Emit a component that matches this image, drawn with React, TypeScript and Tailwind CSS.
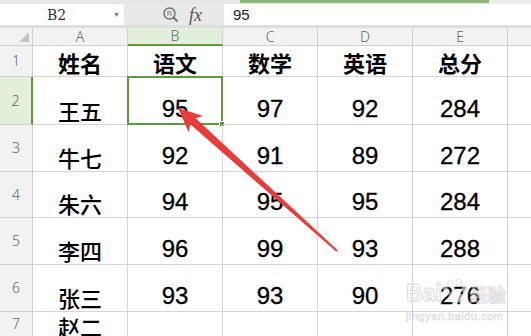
import React from "react";

const cols = ["A", "B", "C", "D", "E"];

const rows = [
  { n: "1", h: "h-[31px]", cells: ["姓名", "语文", "数学", "英语", "总分"], title: true },
  { n: "2", h: "h-[48px]", cells: ["王五", "95", "97", "92", "284"] },
  { n: "3", h: "h-[47px]", cells: ["牛七", "92", "91", "89", "272"] },
  { n: "4", h: "h-[46px]", cells: ["朱六", "94", "95", "95", "284"] },
  { n: "5", h: "h-[47px]", cells: ["李四", "96", "99", "93", "288"] },
  { n: "6", h: "h-[47px]", cells: ["张三", "93", "93", "90", "276"] },
];

const cjk = "font-['Noto_Sans_CJK_SC',sans-serif]";
const num = "font-['Liberation_Sans',Arial,sans-serif]";

function Cell({ value, title, selected }: { value: string; title?: boolean; selected?: boolean }) {
  const isNum = /^\d+$/.test(value);
  return (
    <div className="relative flex items-end justify-center border-r border-b border-[#d4d4d4] pb-[3px]">
      <span
        className={
          isNum
            ? `${num} text-[24px] leading-none text-black [-webkit-text-stroke:0.3px_black]`
            : `${cjk} text-[22px] leading-none text-black ${title ? "font-bold" : "font-medium"}`
        }
      >
        {value}
      </span>
      {selected && (
        <div className="absolute -left-px -top-px -right-px -bottom-px border-2 border-[#5f9a3f]">
          <div className="absolute -right-[4px] -bottom-[4px] size-[6px] bg-[#5f9a3f] border border-white" />
        </div>
      )}
    </div>
  );
}

function Arrow() {
  return (
    <svg className="absolute left-0 top-0 pointer-events-none" width="531" height="336">
      <polygon
        points="178,108 203,116 195.6,118.3 337.6,250.3 336.4,251.7 190.2,124.3 188.6,132.2"
        fill="#ea3b3b"
      />
    </svg>
  );
}

function Watermark() {
  return (
    <div className="absolute left-[406px] top-[278px] pointer-events-none select-none opacity-60">
      <div className="flex items-end">
        <span className={`${num} text-[23px] leading-none font-bold text-white [-webkit-text-stroke:1px_#c4c4c4]`}>
          Bai
        </span>
        <svg width="28" height="26" viewBox="0 0 30 28" className="mb-[1px]">
          <g fill="white" stroke="#c4c4c4" strokeWidth="1">
            <ellipse cx="9" cy="6" rx="3" ry="4" />
            <ellipse cx="18" cy="5" rx="3" ry="4" />
            <ellipse cx="4" cy="13" rx="2.6" ry="3.4" />
            <ellipse cx="24" cy="12" rx="2.6" ry="3.4" />
            <path d="M14 12 C8 14 5 22 9 25 C12 27 17 27 21 25 C25 22 20 14 14 12 Z" />
          </g>
        </svg>
        <span className={`${cjk} text-[18px] leading-none font-bold text-white [-webkit-text-stroke:1px_#c4c4c4] mb-[2px]`}>
          经验
        </span>
      </div>
      <div className={`${num} text-[11px] leading-none text-white [-webkit-text-stroke:0.6px_#c4c4c4] mt-[6px] tracking-[0.5px]`}>
        jingyan.baidu.com
      </div>
    </div>
  );
}

export default function App() {
  return (
    <div className="relative w-[531px] h-[336px] overflow-hidden bg-white">
      {/* ribbon edge */}
      <div className="flex h-[4px] bg-[#e6e6e6]">
        <div className="w-[240px]" />
        <div className="w-[249px] h-[3px] bg-[#8db677]" />
        <div className="flex-1 bg-[#ededed]" />
      </div>

      {/* formula bar */}
      <div className="flex h-[21px] bg-[#e9e9e9]">
        <div className="relative flex w-[124px] items-center bg-white">
          <span className="ml-[47px] font-['DejaVu_Serif',serif] text-[14px] leading-none text-[#333]">B2</span>
          <span className="absolute right-[4px] top-[7px] text-[7px] leading-none text-[#777]">▼</span>
        </div>
        <div className="flex w-[100px] items-center">
          <svg width="18" height="18" viewBox="0 0 18 18" className="ml-[38px]">
            <circle cx="7.5" cy="7.5" r="5.5" fill="none" stroke="#707070" strokeWidth="1.4" />
            <line x1="11.5" y1="11.5" x2="15.5" y2="15.5" stroke="#707070" strokeWidth="2" />
            <text x="7.5" y="10.3" textAnchor="middle" fontSize="7.5" fontFamily="Liberation Sans" fill="#707070">
              R
            </text>
          </svg>
          <span className="ml-[9px] font-['Liberation_Serif',serif] italic text-[18px] leading-none text-[#555]">fx</span>
        </div>
        <div className="flex flex-1 items-center bg-white pl-[9px]">
          <span className={`${num} text-[15px] leading-none text-[#222]`}>95</span>
        </div>
      </div>
      <div className="h-[3px] bg-[#dedede]" />

      {/* sheet */}
      <div className="grid grid-cols-[33px_95px_95px_95px_95px_95px_1fr]">
        <div className="relative h-[18px] border-r border-b border-[#d0d0d0] bg-[#f2f2f2]">
          <svg width="10" height="10" className="absolute right-[3px] bottom-[3px]">
            <polygon points="10,0 10,10 0,10" fill="#c4c4c4" />
          </svg>
        </div>
        {cols.map((c) => (
          <div
            key={c}
            className={`flex h-[18px] items-center justify-center border-r border-[#d0d0d0] ${
              c === "B" ? "bg-[#e3efdb] border-b-2 border-b-[#5f9a3f]" : "bg-[#f2f2f2] border-b"
            }`}
          >
            <span className="font-['Noto_Sans',sans-serif] font-light text-[14px] leading-none text-[#666]">{c}</span>
          </div>
        ))}
        <div className="h-[18px] border-b border-[#d0d0d0] bg-[#f2f2f2]" />

        {rows.map((r) => (
          <React.Fragment key={r.n}>
            <div
              className={`flex ${r.h} items-center justify-center border-b border-[#d0d0d0] ${
                r.n === "2" ? "bg-[#e3efdb] border-r-2 border-r-[#5f9a3f]" : "bg-[#f2f2f2] border-r"
              }`}
            >
              <span className="font-['Noto_Sans',sans-serif] font-light text-[14px] leading-none text-[#666]">{r.n}</span>
            </div>
            {r.cells.map((v, i) => (
              <Cell key={i} value={v} title={r.title} selected={r.n === "2" && i === 1} />
            ))}
            <div className="border-b border-[#d4d4d4]" />
          </React.Fragment>
        ))}

        {/* row 7, cut off by the window */}
        <div className="flex h-[24px] items-start justify-center border-r border-[#d0d0d0] bg-[#f2f2f2] pt-[5px]">
          <span className="font-['Noto_Sans',sans-serif] font-light text-[14px] leading-none text-[#666]">7</span>
        </div>
        <div className="flex h-[24px] items-start justify-center border-r border-[#d4d4d4] pt-[3px]">
          <span className={`${cjk} text-[22px] leading-none text-black font-medium`}>赵二</span>
        </div>
        <div className="border-r border-[#d4d4d4]" />
        <div className="border-r border-[#d4d4d4]" />
        <div className="border-r border-[#d4d4d4]" />
        <div className="border-r border-[#d4d4d4]" />
        <div />
      </div>

      <Arrow />
      <Watermark />
    </div>
  );
}
